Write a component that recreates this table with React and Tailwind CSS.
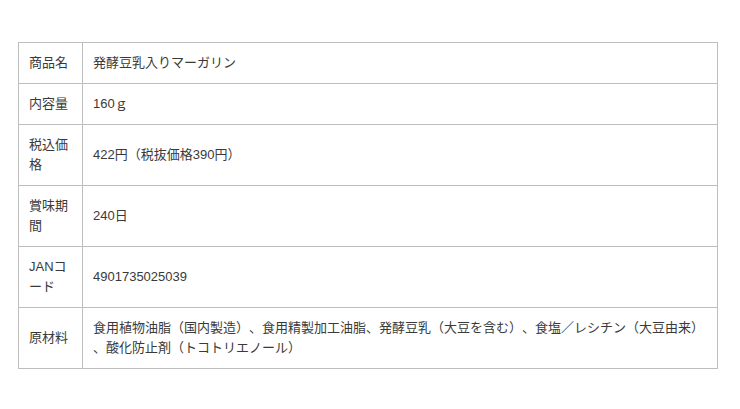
export default function App() {
  const rows = [
    ["商品名", "発酵豆乳入りマーガリン"],
    ["内容量", "160ｇ"],
    ["税込価格", "422円（税抜価格390円）"],
    ["賞味期間", "240日"],
    ["JANコード", "4901735025039"],
    [
      "原材料",
      <>
        食用植物油脂（国内製造）、食用精製加工油脂、発酵豆乳（大豆を含む）、食塩／レシチン（大豆由来）
        <br />
        、酸化防止剤（トコトリエノール）
      </>,
    ],
  ];
  return (
    <div
      className="w-[740px] h-[409px] bg-white pt-[42px] pl-[18px]"
      style={{ fontFamily: '"Liberation Sans", "Noto Sans CJK JP", sans-serif' }}
    >
      <table className="w-[700px] border-collapse text-[13px] leading-[20px] text-[#3a3a3a] [text-spacing-trim:space-all]">
        <tbody>
          {rows.map(([k, v], i) => (
            <tr key={i}>
              <td className="w-[64px] border border-[#bdbdbd] px-[10px] py-[10px] align-middle">
                {k}
              </td>
              <td className="border border-[#bdbdbd] px-[10px] py-[10px] align-middle">
                {v}
              </td>
            </tr>
          ))}
        </tbody>
      </table>
    </div>
  );
}
